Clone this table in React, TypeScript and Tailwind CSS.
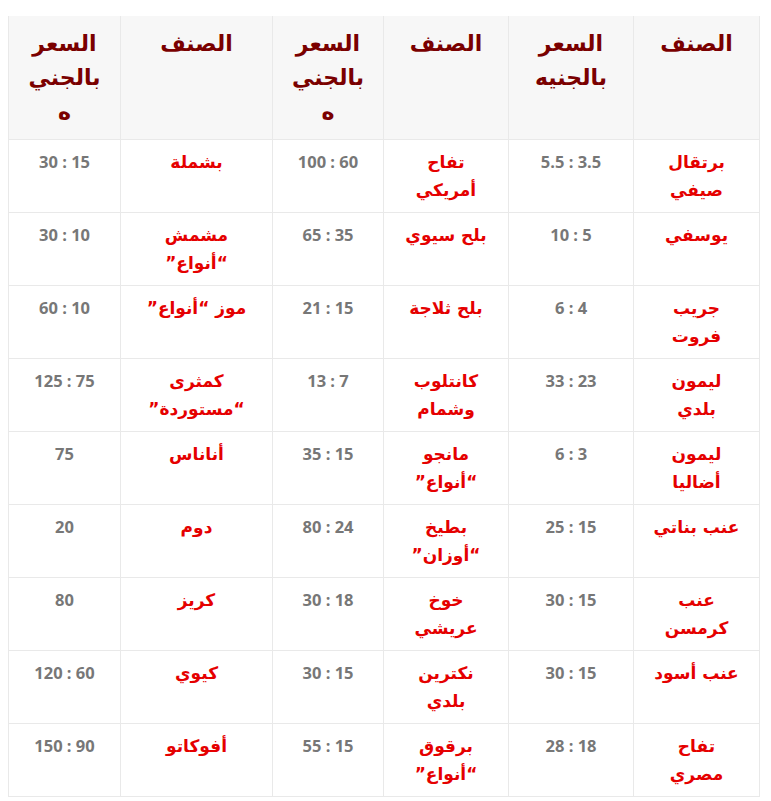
import React from 'react';

type Row = [string[], string, string[], string, string[], string];

const rows: Row[] = [
  [['برتقال', 'صيفي'], '3.5 : 5.5', ['تفاح', 'أمريكي'], '60 : 100', ['بشملة'], '15 : 30'],
  [['يوسفي'], '5 : 10', ['بلح سيوي'], '35 : 65', ['مشمش', '“أنواع”'], '10 : 30'],
  [['جريب', 'فروت'], '4 : 6', ['بلح ثلاجة'], '15 : 21', ['موز “أنواع”'], '10 : 60'],
  [['ليمون', 'بلدي'], '23 : 33', ['كانتلوب', 'وشمام'], '7 : 13', ['كمثرى', '“مستوردة”'], '75 : 125'],
  [['ليمون', 'أضاليا'], '3 : 6', ['مانجو', '“أنواع”'], '15 : 35', ['أناناس'], '75'],
  [['عنب بناتي'], '15 : 25', ['بطيخ', '“أوزان”'], '24 : 80', ['دوم'], '20'],
  [['عنب', 'كرمسن'], '15 : 30', ['خوخ', 'عريشي'], '18 : 30', ['كريز'], '80'],
  [['عنب أسود'], '15 : 30', ['نكترين', 'بلدي'], '15 : 30', ['كيوي'], '60 : 120'],
  [['تفاح', 'مصري'], '18 : 28', ['برقوق', '“أنواع”'], '15 : 55', ['أفوكاتو'], '90 : 150'],
];

const headers: string[][] = [
  ['الصنف'],
  ['السعر', 'بالجنيه'],
  ['الصنف'],
  ['السعر', 'بالجني', 'ه'],
  ['الصنف'],
  ['السعر', 'بالجني', 'ه'],
];

const widths = ['w-[126px]', 'w-[125px]', 'w-[125px]', 'w-[111px]', 'w-[152px]', 'w-[112px]'];

function Lines({ lines }: { lines: string[] }) {
  return (
    <>
      {lines.map((l, i) => (
        <span key={i} className="block whitespace-nowrap">
          {l}
        </span>
      ))}
    </>
  );
}

function ItemCell({ lines }: { lines: string[] }) {
  return (
    <td className="border border-[#e9e9e9] px-2 pt-[8px] pb-[8px] align-top text-center text-[17px] leading-[28px] font-bold text-[#e50000]">
      <Lines lines={lines} />
    </td>
  );
}

function PriceCell({ value }: { value: string }) {
  return (
    <td className="border border-[#e9e9e9] px-2 pt-[10px] align-top text-center font-['Open_Sans','Noto_Sans',sans-serif] text-[16.5px] leading-[24px] font-bold text-[#777777]">
      {value}
    </td>
  );
}

export default function App() {
  return (
    <div className="bg-white min-h-screen pt-4 pl-2 font-['DejaVu_Sans','Noto_Sans',sans-serif]">
      <table dir="rtl" className="table-fixed border-collapse w-[751px]">
        <colgroup>
          {widths.map((w, i) => (
            <col key={i} className={w} />
          ))}
        </colgroup>
        <thead>
          <tr className="bg-[#f7f7f7]">
            {headers.map((h, i) => (
              <th
                key={i}
                className="border border-[#e9e9e9] border-t-0 px-2 pt-[11px] pb-[10px] align-top text-center text-[22px] leading-[34px] font-bold text-[#7a0000]"
              >
                <Lines lines={h} />
              </th>
            ))}
          </tr>
        </thead>
        <tbody>
          {rows.map((r, i) => (
            <tr key={i}>
              <ItemCell lines={r[0]} />
              <PriceCell value={r[1]} />
              <ItemCell lines={r[2]} />
              <PriceCell value={r[3]} />
              <ItemCell lines={r[4]} />
              <PriceCell value={r[5]} />
            </tr>
          ))}
        </tbody>
      </table>
    </div>
  );
}
